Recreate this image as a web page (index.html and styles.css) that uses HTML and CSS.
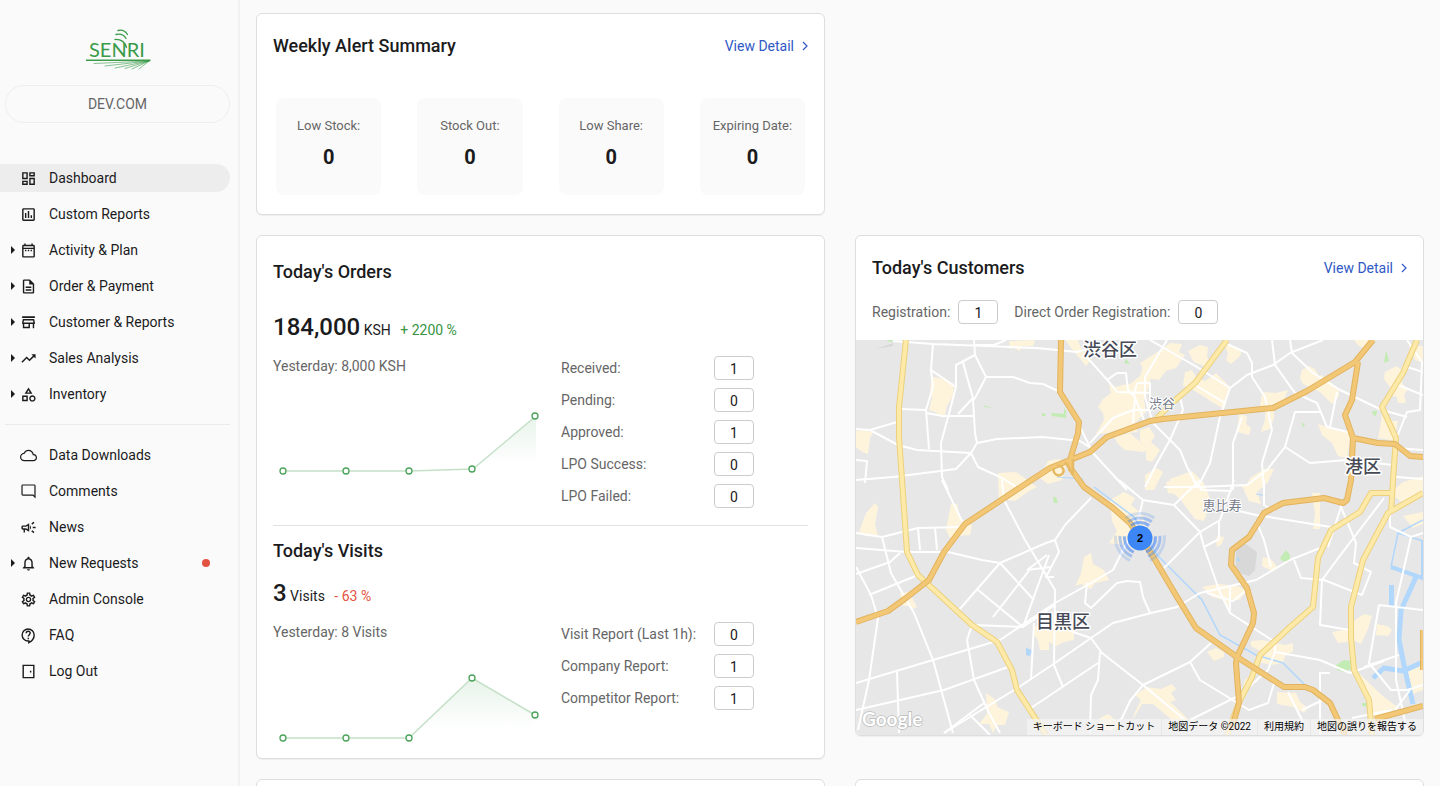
FILE: index.html
```html
<!DOCTYPE html>
<html lang="en">
<head>
<meta charset="utf-8">
<meta name="viewport" content="width=device-width, initial-scale=1">
<title>SENRI Dashboard</title>
<link rel="stylesheet" href="styles.css">
</head>
<body>
<div class="app">
  <aside class="sidebar">
    <svg class="logo" viewBox="85 28 68 42" role="img" aria-label="SENRI">
      <text class="logo-word" x="89" y="57">SENRI</text>
      <g fill="none" stroke="#3a9b49" stroke-linecap="round">
        <path d="M118 30.500q6-1.500 9.500 4" stroke-width="1.300"/>
        <path d="M116 34.500q7-1.500 10 4" stroke-width="1.300"/>
        <path d="M115 39.500q9-.5 11.500 8" stroke-width="1.300"/>
        <path d="M86 60.300h64.500" stroke-width="1.400" stroke-linecap="butt"/>
        <path d="M149 61 94 63.500M149 61l-44 5M149 61l-34 7M149 61l-24 7.500M149 61l-17 8M149 61l-10 8" stroke-width=".6"/>
      </g>
    </svg>
    <div class="tenant">DEV.COM</div>
    <nav class="nav" aria-label="Main">
      <a class="nav-item active" href="#"><span class="lead"></span><svg class="icon" viewBox="0 0 24 24"><path d="M19 5v2h-4V5h4M9 5v6H5V5h4m10 8v6h-4v-6h4M9 17v2H5v-2h4M21 3h-8v6h8V3zM11 3H3v10h8V3zm10 8h-8v10h8V11zm-10 4H3v6h8v-6z"/></svg>Dashboard</a>
      <a class="nav-item" href="#"><span class="lead"></span><svg class="icon" viewBox="0 0 24 24"><path d="M19 3H5c-1.100 0-2 .9-2 2v14c0 1.100.9 2 2 2h14c1.100 0 2-.9 2-2V5c0-1.100-.9-2-2-2zm0 16H5V5h14v14zM7 10h2v7H7zm4-3h2v10h-2zm4 6h2v4h-2z"/></svg>Custom Reports</a>
      <a class="nav-item" href="#"><span class="lead caret"></span><svg class="icon" viewBox="0 0 24 24"><path d="M7 11h2v2H7v-2zm14-5v14c0 1.100-.9 2-2 2H5c-1.110 0-2-.9-2-2l.01-14c0-1.100.88-2 1.990-2h1V2h2v2h8V2h2v2h1c1.100 0 2 .9 2 2zM5 8h14V6H5v2zm14 12V10H5v10h14zm-4-7h2v-2h-2v2zm-4 0h2v-2h-2v2z"/></svg>Activity &amp; Plan</a>
      <a class="nav-item" href="#"><span class="lead caret"></span><svg class="icon" viewBox="0 0 24 24"><path d="M8 16h8v2H8zm0-4h8v2H8zm6-10H6c-1.100 0-2 .9-2 2v16c0 1.100.89 2 1.990 2H18c1.100 0 2-.9 2-2V8l-6-6zm4 18H6V4h7v5h5v11z"/></svg>Order &amp; Payment</a>
      <a class="nav-item" href="#"><span class="lead caret"></span><svg class="icon" viewBox="0 0 24 24"><path d="M18.360 9l.6 3H5.040l.6-3h12.720M21 3H3v2.500h18V3zm-1 4H4l-1 5v2h1v6h10v-6h4v6h2v-6h1v-2l-1-5zM6 18v-4h6v4H6z"/></svg>Customer &amp; Reports</a>
      <a class="nav-item" href="#"><span class="lead caret"></span><svg class="icon" viewBox="0 0 24 24"><path d="M16 6l2.290 2.290-4.880 4.880-4-4L2 16.590 3.410 18l6-6 4 4 6.300-6.290L22 12V6z"/></svg>Sales Analysis</a>
      <a class="nav-item" href="#"><span class="lead caret"></span><svg class="icon" viewBox="0 0 24 24"><path d="M12 2l-5.500 9h11L12 2zm0 3.840L13.930 9h-3.870L12 5.840zM17.500 13c-2.490 0-4.500 2.010-4.500 4.500s2.010 4.500 4.500 4.500 4.500-2.010 4.500-4.500-2.010-4.500-4.500-4.500zm0 7c-1.380 0-2.500-1.120-2.500-2.500s1.120-2.500 2.500-2.500 2.500 1.120 2.500 2.500-1.120 2.500-2.500 2.500zM3 21.500h8v-8H3v8zm2-6h4v4H5v-4z"/></svg>Inventory</a>
      <hr class="nav-divider">
      <a class="nav-item" href="#"><span class="lead"></span><svg class="icon" viewBox="0 0 24 24"><path d="M19.350 10.040C18.670 6.590 15.640 4 12 4 9.110 4 6.600 5.640 5.350 8.040 2.340 8.360 0 10.910 0 14c0 3.310 2.690 6 6 6h13c2.760 0 5-2.240 5-5 0-2.640-2.050-4.780-4.650-4.960zM19 18.300H6c-2.400 0-4.300-1.900-4.300-4.300 0-2.200 1.700-4 3.800-4.200l1-.1.500-.9C8 7 9.900 5.700 12 5.700c2.750 0 5.150 2 5.700 4.700l.3 1.200 1.300.1c1.700.1 3 1.500 3 3.200 0 1.850-1.450 3.400-3.300 3.400z"/></svg>Data Downloads</a>
      <a class="nav-item" href="#"><span class="lead"></span><svg class="icon" viewBox="0 0 24 24"><path d="M20.300 18l-1.500-1.700H3.700V3.700h16.600V18zM20 2H4c-1.100 0-2 .9-2 2v12c0 1.100.9 2 2 2h14l4 4V4c0-1.100-.9-2-2-2z"/></svg>Comments</a>
      <a class="nav-item" href="#"><span class="lead"></span><svg class="icon" viewBox="0 0 24 24"><path d="M18 11v2h4v-2h-4zm-2 6.610c.96.71 2.210 1.650 3.200 2.390.4-.53.8-1.070 1.200-1.600-.99-.74-2.240-1.680-3.200-2.400-.4.54-.8 1.080-1.200 1.610zM20.400 5.600c-.4-.53-.8-1.070-1.200-1.600-.99.74-2.240 1.680-3.200 2.400.4.530.8 1.070 1.200 1.600.96-.72 2.210-1.650 3.200-2.400zM4 9c-1.100 0-2 .9-2 2v2c0 1.100.9 2 2 2h1v4h2v-4h1l5 3V6L8 9H4zm5.030 1.710L11 9.530v4.940l-1.970-1.180-.48-.29H4v-2h4.550l.48-.29zM15.500 12c0-1.330-.58-2.530-1.500-3.350v6.690c.92-.81 1.500-2.010 1.500-3.340z"/></svg>News</a>
      <a class="nav-item" href="#"><span class="lead caret"></span><svg class="icon" viewBox="0 0 24 24"><path d="M12 22c1.100 0 2-.9 2-2h-4c0 1.100.9 2 2 2zm6-6v-5c0-3.070-1.630-5.640-4.500-6.320V4c0-.83-.67-1.500-1.500-1.500s-1.500.67-1.500 1.500v.68C7.640 5.360 6 7.920 6 11v5l-2 2v1h16v-1l-2-2zm-2 1H8v-6c0-2.480 1.510-4.500 4-4.500s4 2.020 4 4.500v6z"/></svg>New Requests<span class="dot"></span></a>
      <a class="nav-item" href="#"><span class="lead"></span><svg class="icon" viewBox="0 0 24 24"><path d="M19.430 12.980c.04-.32.07-.64.07-.98 0-.34-.03-.66-.07-.98l2.110-1.650c.19-.15.24-.42.12-.64l-2-3.460c-.09-.16-.26-.25-.44-.25-.06 0-.12.01-.17.03l-2.490 1c-.52-.4-1.080-.73-1.690-.98l-.38-2.650C14.460 2.180 14.250 2 14 2h-4c-.25 0-.46.18-.49.42l-.38 2.650c-.61.25-1.170.59-1.690.98l-2.490-1c-.06-.02-.12-.03-.18-.03-.17 0-.34.09-.43.25l-2 3.460c-.13.22-.07.49.12.64l2.110 1.650c-.04.32-.07.65-.07.98 0 .33.03.66.07.98l-2.110 1.650c-.19.15-.24.42-.12.64l2 3.460c.09.16.26.25.44.25.06 0 .12-.01.17-.03l2.490-1c.52.4 1.080.73 1.690.98l.38 2.650c.03.24.24.42.49.42h4c.25 0 .46-.18.49-.42l.38-2.650c.61-.25 1.170-.59 1.690-.98l2.490 1c.06.02.12.03.18.03.17 0 .34-.09.43-.25l2-3.460c.12-.22.07-.49-.12-.64l-2.110-1.650zm-1.980-1.710c.04.31.05.52.05.73 0 .21-.02.43-.05.73l-.14 1.130.89.7 1.080.84-.7 1.210-1.270-.51-1.040-.42-.9.68c-.43.32-.84.56-1.250.73l-1.060.43-.16 1.130-.2 1.350h-1.400l-.19-1.350-.16-1.130-1.060-.43c-.43-.18-.83-.41-1.230-.71l-.91-.7-1.060.43-1.270.51-.7-1.210 1.080-.84.89-.7-.14-1.130c-.03-.31-.05-.54-.05-.74s.02-.43.05-.73l.14-1.130-.89-.7-1.080-.84.7-1.210 1.270.51 1.040.42.9-.68c.43-.32.84-.56 1.250-.73l1.060-.43.16-1.130.2-1.350h1.390l.19 1.350.16 1.130 1.060.43c.43.18.83.41 1.230.71l.91.7 1.060-.43 1.270-.51.7 1.210-1.070.85-.89.7.14 1.130zM12 8c-2.210 0-4 1.790-4 4s1.790 4 4 4 4-1.790 4-4-1.790-4-4-4zm0 6c-1.100 0-2-.9-2-2s.9-2 2-2 2 .9 2 2-.9 2-2 2z"/></svg>Admin Console</a>
      <a class="nav-item" href="#"><span class="lead"></span><svg class="icon line" viewBox="0 0 24 24"><path d="M11.500 2.800a8.500 8.500 0 1 0 0 17h1v2.400c4.500-2.400 7.500-6.800 7.500-10.900a8.500 8.500 0 0 0-8.500-8.500zM8.800 8.700c0-3.600 5.600-3.500 5.600-.2 0 2.300-2.700 2.400-2.700 5M11.700 15.200v2"/></svg>FAQ</a>
      <a class="nav-item" href="#"><span class="lead"></span><svg class="icon line" viewBox="0 0 24 24"><path d="M4.500 3.300h15v17.400h-15zM15 11v2.500"/></svg>Log Out</a>
    </nav>
    <div class="sidebar-foot">
      <button class="collapse" type="button" aria-label="Collapse menu"><svg viewBox="0 0 12 14"><path d="M9 1 3 7l6 6"/></svg></button>
    </div>
  </aside>

  <main class="main">
    <section class="card alerts">
      <header class="card-head"><h2>Weekly Alert Summary</h2><a class="detail" href="#">View Detail<svg viewBox="0 0 6 10"><path d="M1 1l4 4-4 4"/></svg></a></header>
      <div class="tiles">
        <div class="tile"><span>Low Stock:</span><b>0</b></div>
        <div class="tile"><span>Stock Out:</span><b>0</b></div>
        <div class="tile"><span>Low Share:</span><b>0</b></div>
        <div class="tile"><span>Expiring Date:</span><b>0</b></div>
      </div>
    </section>

    <section class="card today">
      <h2>Today's Orders</h2>
      <p class="value orders-value"><b>184,000</b> KSH <span class="up">+ 2200 %</span></p>
      <div class="split">
        <div>
          <p class="prev">Yesterday: 8,000 KSH</p>
          <svg class="chart" viewBox="0 0 272 100" role="img" aria-label="Orders trend">
            <defs><linearGradient id="fade" x1="0" y1="0" x2="0" y2="1"><stop offset="0" stop-color="#3a9b49" stop-opacity=".12"/><stop offset=".85" stop-color="#3a9b49" stop-opacity="0"/></linearGradient></defs>
            <path d="M10 95h127l63-2 63-53v55z" fill="url(#fade)"/>
            <path class="trend" d="M10 95h127l63-2 63-53"/>
            <g class="points"><circle cx="10" cy="95" r="3"/><circle cx="73" cy="95" r="3"/><circle cx="136" cy="95" r="3"/><circle cx="199" cy="93" r="3"/><circle cx="262" cy="40" r="3"/></g>
          </svg>
        </div>
        <dl class="counts">
          <div><dt>Received:</dt><dd>1</dd></div>
          <div><dt>Pending:</dt><dd>0</dd></div>
          <div><dt>Approved:</dt><dd>1</dd></div>
          <div><dt>LPO Success:</dt><dd>0</dd></div>
          <div><dt>LPO Failed:</dt><dd>0</dd></div>
        </dl>
      </div>
      <hr class="rule">
      <h2>Today's Visits</h2>
      <p class="value visits-value"><b>3</b> Visits <span class="down">- 63 %</span></p>
      <div class="split">
        <div>
          <p class="prev">Yesterday: 8 Visits</p>
          <svg class="chart" viewBox="0 0 272 100" role="img" aria-label="Visits trend">
            <path d="M10 96h126l63-60 63 37v23z" fill="url(#fade)"/>
            <path class="trend" d="M10 96h126l63-60 63 37"/>
            <g class="points"><circle cx="10" cy="96" r="3"/><circle cx="73" cy="96" r="3"/><circle cx="136" cy="96" r="3"/><circle cx="199" cy="36" r="3"/><circle cx="262" cy="73" r="3"/></g>
          </svg>
        </div>
        <dl class="counts">
          <div><dt>Visit Report (Last 1h):</dt><dd>0</dd></div>
          <div><dt>Company Report:</dt><dd>1</dd></div>
          <div><dt>Competitor Report:</dt><dd>1</dd></div>
        </dl>
      </div>
    </section>

    <section class="card customers">
      <header class="card-head"><h2>Today's Customers</h2><a class="detail" href="#">View Detail<svg viewBox="0 0 6 10"><path d="M1 1l4 4-4 4"/></svg></a></header>
      <dl class="registrations">
        <div><dt>Registration:</dt><dd>1</dd></div>
        <div><dt>Direct Order Registration:</dt><dd>0</dd></div>
      </dl>
      <div class="map">
        <svg class="map-art" viewBox="856 340 567 395" role="img" aria-label="Map of Meguro, Shibuya and Minato">
          <rect x="856" y="340" width="567" height="395" fill="#e7e7e7"/>
          <!-- built-up areas -->
          <g fill="#fef4dc">
            <path d="M932 377l8 1 14 6-1 12-6 10-3 12-9-6-6-2 3-12-2-9z"/>
            <path d="M1009 341l26-1-2 6-11 0-2 5-6-3-4 1z"/>
            <path d="M1065 340l13 0 2 6 10 15-4 5-14-17z"/>
            <path d="M1103 399l8-6-2-10 7 4 6-2 8-1 10-8 4-12 6-8v28l-6 16 2 12-12 12 4 8-10 1-8-4-12 4-12 1 8-14-1-7-5-6z"/>
            <path d="M1114 437l16-4 18 16-4 3-19-2-7-6z"/>
            <path d="M1140 363l8-5 14-9 8-6 12 1-3 8 6 3-9 13-10 3-7 9-8-1-5-5z"/>
            <path d="M1188 351l12-6 8 2-1 10 4 7-7 2-10-4z"/>
            <path d="M1185 372l7-2 4 7 9 4 11-8 14 14-6 22-12-7-20-13-9-3z"/>
            <path d="M1225 346l8 0 9 4-2 6-9 8-5-4 2-6z"/>
            <path d="M1300 378l2-8 7-4 6 3 4 8 3-2 17 14 0 7-7 8-12-12-17-8z"/>
            <path d="M1262 392l14 1 12-3-4 10-12 6-12 0z"/><path d="M1265 410l9-2 0 10-4 11-9 3 4-12z"/>
            <path d="M1239 414l8 2-1 8 5 4-2 7-12-3z"/>
            <path d="M1318 424l16 5 17 4-4 25-9-2-6-13-10-8z"/>
            <path d="M1354 340l18 0-5 9-8-3z"/>
            <path d="M1385 372l11-6 8 5-2 12 6 6-4 6 2 8-8 0-1-6-9-2 2-8-6-8z"/>
            <path d="M1382 411l10 10 6 0-2 10 0 10-18-3 3-16z"/>
            <path d="M1409 346l14 0v17l-8-3z"/>
            <path d="M1140 430l9-3 6 9-4 6 9 8-8 12-6-2 0-12-6-7z"/>
            <path d="M1145 475l12-7 6 4-9 18-9 0z"/><path d="M1166 482l12-4 8 9-6 8-12-2z"/>
            <path d="M1250 478l14-9 10 0-6 13-11 10 4 12-12-3-5-10z"/>
            <path d="M1170 479l22-8 12 12 7 18-7 20-9-2-15-20-8-7z"/>
            <path d="M856 431l6-1 11 2-3 6-2 16-6-2-6-5z"/>
            <path d="M1048 461l10-2 9 3-5 18-14 4-8-6z"/>
            <path d="M998 473l18-1 14 10 7 5-8 4-14 10-16-2z"/>
            <path d="M866 513l9-10 3 4-3 18 3 11-13 0-6-4z"/>
            <path d="M951 504l6 0 3 14 12 7-2 10-13 1-7 2-4-8z"/>
            <path d="M1110 500l14-8 11 6-4 7 12 10 4 16-10 6-12 4-2 4-14-2 8-12-5-10z"/>
            <path d="M1084 557l7-4 2 11 11 6 5 10-14 3-4 6-10-5-6 2 6-12z"/>
            <path d="M1034 626h30l10 7 0 7-10 2-8 4-7-4 0 8-9 0-2-10-4-5z"/>
            <path d="M900 593l9-1 8 15-4 2-5-3-5 0z"/>
            <path d="M1202 587l16-3 20 2 9 5-8 9-8-1-3 9-4-8-12-3z"/>
            <path d="M1217 536l7 1-2 7-5 3-1-6z"/>
            <path d="M1263 557l8 2 7 9-6 3-10-5z"/>
            <path d="M1312 493l8 0 0 36-7 0 2-15z"/><path d="M1241 486l14-6 8 3-6 8-8 3z"/>
            <path d="M1251 641l12-1 22 5 8-2 0 8-8 5-2 7-13 2-14-4 4-10-9-5z"/>
            <path d="M1207 652l9-4 8 4 0 5-10 4z"/>
            <path d="M1147 687l14 2 11-5 4 5-5 4 5 7-6 2 12 11 7 7-17 0-19-16-11 0-10 17 3-9 6-12-6-5z"/>
            <path d="M986 693l10 7 1 7 12 5-4 13-8 0-4 8-4-9-10 0 8-10z"/>
            <path d="M1277 692l19 1 4 9 8 6-4 5-11-6-16-3z"/>
            <path d="M1355 620l9-6 8 2-4 13-7 15-6-3-17 2-6-11 17-3z"/>
            <path d="M1377 624l10 2 5 4-4 6-12-1z"/>
            <path d="M1358 672l12 12 14 13 15 11-13 6-11 5-5-16z"/>
            <path d="M1403 482l20-6v19l-14 8-9-2-5-4-4-5z"/><path d="M1403 516l20-4v12l-10 4z"/>
            <path d="M1245 680l8-7-3 14-6 12-1-11zM1408 672l15-7 0 25-10 4z"/>
            <path d="M1100 718l8-4 14 11-6 4-18 2z"/>
          </g>
          <!-- parks, cemetery and ponds -->
          <g fill="#c3ebb4"><path d="M1051 413l15 1 0 4-14-2zM1042 413l4 1-1 2-3 0zM1064 408l3 4-3 3zM983 405l10 3-8-1zM1126 359l4 5-6-1zM1280 558l6-8 4 5 0 7-8-1zM1386 350l3 11-5 2zM1372 411l5 0-1 5-3-1zM1053 497l3 0 2 6-4 0zM1336 665l8-5 8 1-1 8-7 3-7-2zM1362 703l8 0 0 4-8-1zM886 340l11 0-7 2zM1302 423l3 1-2 4z"/></g>
          <path d="M1236 546l10-2 11 8-2 18-6 6-13-4zM876 349l17-6 0 3z" fill="#d8d8d8"/>
          <g fill="#b1d7fc"><path d="M1026 648l6 2-2 6-4-1zM1238 557l2 4-4 0zM1389 585h5v22h-5z"/></g>
          <g fill="none" stroke="#b1d7fc">
            <path d="M1094 487l40 30 23 38 45 45 18 35 36 20 27 8 22 22" stroke-width="1.500"/>
            <path d="M1391 567l7-34 25 8M1398 533l25-13" stroke-width="1.500"/>
            <path d="M1391 567l32 11M1423 540v40" stroke-width="4"/>
            <path d="M1416 577l-15 33-2 30 6 30 8 34M1373 678l11-10 19 3 20-9" stroke-width="5"/>
            <path d="M1057 477l26 2M1256 494l10 2" stroke-width="1"/>
          </g>
          <!-- minor streets -->
          <g class="street">
            <path d="M893 341l40 3 104 4 40 4 14-4M974 340l1 15 11 22-11 21-2 2 2 33 2 10-6 10-15 16-63 8-37 3M933 344l-2 26 2 17-7 23-26-1"/>
            <path d="M931 370l25 17-6 23-9 33 1 34 6 13M975 355l-19 10v22M963 362l4 15 6 21-15 16M926 410l3 39M926 413l17 3h30"/>
            <path d="M856 429l14 1 28 15 19 5 54 3 7 14 22 10 18 11M870 430l27-8M986 377h27l17 6 13 1 17 8M977 443l20-4 46-2 37 4 11 7M856 460l11 1-2 22M1080 427l13 26 34 37"/>
            <path d="M1085 355l25 28 7 9 33 1M1107 380l10-7h9l2 17 7 7-2 26M1090 443l23-25 20-8h17M1137 383l-3 12 10 25M974 345h20l12-5M1138 383h12v30"/>
            <path d="M1150 340l47 27 33 21M1167 340l-22 37v20l8 26 27 27 7 17 11 20M1195 385l30 18M1180 397l3 13-13 30-13 23-12 24M1225 343l22 10 5 10v14l13 20 7 33-10 33 2 27"/>
            <path d="M1323 340l-33 13-17 12-26 10-17 13-10 29-10 46-12 24h-34M1272 340l3 25 20 28 22 10 10 24 25 6M1290 340l2 13 21 20 27 17 42 20 25 7M1337 392l-7 35M1320 412h-25l-10 35-18 23-20 15-50 2"/>
            <path d="M1285 447l25 16 37-3 46 5M1242 417l-9 26v47M1407 340l15 22-2 48-13 2-10 25M1398 385l25 10M1396 477l27 2M1395 448l28 2M1404 366l19 6"/>
            <path d="M1002 480l2 20 21 40 30 50-1 75 9 22M942 480l21 43M856 533l26 4 36-9 45-1M918 528l2 22M935 528l2 22M856 548l51 4h41l34 8 18 3 34 37"/>
            <path d="M882 537l9 36 23 40 19 47 20 73M856 574l34-12 10-9M869 595l49-20M856 567l15 28 7 23-9 62-11 50M856 683l77-23 67-20 55-37 36-20 22-13 15-30"/>
            <path d="M856 710l88-20 64-23M897 672l2 61M1000 563l46-20 9-3 10-15 26-27M1000 563l-41 47M978 590l45 37M1031 568l-38 49M1049 555l-26 72M1034 623l-3 57M1055 540l4 12-13 25 8 0M1027 570l24-3M1027 570l20-15"/>
            <path d="M972 625l-5 15 7 40 15 33 11 20M972 625l51 2 32-22M1091 638l22-15 38-10 26-6 23-14 56-13 34-20 30-12M1091 638l-36 25-36 24-75 46"/>
            <path d="M1055 620l18 12 18 6 11 15 41 32 42 35M1100 652l-2 28-7 15-1 38M1087 583l-2 20 6 5 26-25 10-2 13 1 3 15 7 16M1098 663l-70 47M1110 730l12-12 8-17 13-16 47-23 21-19M944 733l40-30M970 715l20 20"/>
            <path d="M1190 662l10 18 49 30 19-7 7-23M1190 720l50-25 28-25 7-18 45 8 30 13 34-12M1320 735v-62h10M1119 480l24 20 31 5 26 27 4 15 15 43 11 23 45 29v10M1143 500l-5 20M1174 505l26-25M1164 568l36-36 20-12 14-40M1204 547l15-8 0-18"/>
            <path d="M1193 480l9 10 30 1M1264 480v25l10 6M1226 508l30 7 75 12M1341 500v7l15 36-2 20 17 9-9 23-38-15-23-2-7-18M1384 498l-45 59-17 23-2 45 30 5M1256 520l8 20 7 27M1341 507l-13 40M1390 513l0 14 21 10 12-4"/>
            <path d="M1411 537l-15 66v77l11 50M1379 605l44 5M1379 605l-10 58 22 27 16 0 16-5M1364 667l35-12M1395 710l15-20M1288 692l15 30M1302 710l25-12M1352 718l40-8M1207 593l26 8 16-13M1230 586v25"/>
          </g>
          <!-- secondary roads -->
          <g fill="none" stroke-linejoin="round">
            <g stroke="#ecd07c" stroke-width="6">
              <path d="M906 340l-7 67v30l3 43 5 72 11 23 54 50 25 17 15 28 5 20 29 45M1227 340l-32 43-22 19-16 16M1417 340l-14 33-21 34 14 31-3 42-2 33"/>
              <path d="M1423 493l-35 20-25 47-12 47v30l3 33 15 30 3 35M1391 493h-20l-11 19-29 18-13 28-5 49-23 20-30 28-8 22-12 23-13 35"/>
            </g>
            <g stroke="#fdeaa9" stroke-width="4">
              <path d="M906 340l-7 67v30l3 43 5 72 11 23 54 50 25 17 15 28 5 20 29 45M1227 340l-32 43-22 19-16 16M1417 340l-14 33-21 34 14 31-3 42-2 33"/>
              <path d="M1423 493l-35 20-25 47-12 47v30l3 33 15 30 3 35M1391 493h-20l-11 19-29 18-13 28-5 49-23 20-30 28-8 22-12 23-13 35"/>
            </g>
          </g>
          <!-- motorways -->
          <g fill="none" stroke-linejoin="round">
            <g stroke="#e2b35e" stroke-width="6">
              <path d="M1061 340l-1 52 19 30-1 11-8 27 1 9 13 18 29 21 17 15 21 30 26 44 19 31 41 29 47 30h21l8 3 17 13 15 32"/>
              <path d="M856 622l32-11 18-13 23-18 15-28 21-28 65-43 20-13 40-16 17-15 43-16 13-2 110-11 34-17 48-29 18-22M1358 362l-6 38-7 15 8 23-2 42-4 20-4 3-19-5-41 5-19 10-15 24-17 13-1 15 16 23 7 25-1 10-16 34-1 6 3 40-7 25M1353 438l25 5 17 1 15 12 14 1M1375 719l48-13M1423 630v40"/>
            </g>
            <g stroke="#f2c876" stroke-width="4">
              <path d="M1061 340l-1 52 19 30-1 11-8 27 1 9 13 18 29 21 17 15 21 30 26 44 19 31 41 29 47 30h21l8 3 17 13 15 32"/>
              <path d="M856 622l32-11 18-13 23-18 15-28 21-28 65-43 20-13 40-16 17-15 43-16 13-2 110-11 34-17 48-29 18-22M1358 362l-6 38-7 15 8 23-2 42-4 20-4 3-19-5-41 5-19 10-15 24-17 13-1 15 16 23 7 25-1 10-16 34-1 6 3 40-7 25M1353 438l25 5 17 1 15 12 14 1M1375 719l48-13M1423 630v40"/>
            </g>
            <path d="M1054 468c-2 6 5 10 9 5 2-4-2-8-6-7M1065 462l8 12v-15" stroke="#e8ba63" stroke-width="2.500"/>
          </g>
          <g class="map-label">
            <text class="ward" x="1110" y="356">渋谷区</text>
            <text class="ward" x="1363" y="473">港区</text>
            <text class="ward" x="1063" y="628">目黒区</text>
            <text class="area" x="1162" y="408">渋谷</text>
            <text class="area" x="1222" y="510">恵比寿</text>
          </g>
          <g fill="none" stroke="#4285f4" stroke-dasharray="72 48" transform="rotate(-6 1140 538)">
            <circle cx="1140" cy="538" r="15.500" pathLength="360" stroke-width="3" stroke-opacity=".6"/>
            <circle cx="1140" cy="538" r="20" pathLength="360" stroke-width="3" stroke-opacity=".4"/>
            <circle cx="1140" cy="538" r="24.500" pathLength="360" stroke-width="3" stroke-opacity=".2"/>
          </g>
          <circle cx="1140" cy="538" r="12.500" fill="#3c86f5"/>
          <text class="cluster" x="1140" y="542">2</text>
          <text class="google" x="862" y="726">Google</text>
        </svg>
        <div class="attribution" lang="ja">
          <button type="button">キーボード ショートカット</button><span>地図データ ©2022</span><a href="#">利用規約</a><a href="#">地図の誤りを報告する</a>
        </div>
      </div>
    </section>

    <section class="card next"></section>
    <section class="card next"></section>
  </main>
</div>
</body>
</html>
```

FILE: styles.css
```css
* { box-sizing: border-box; }
body {
  margin: 0;
  background: #fafafa;
  color: #1b1b1d;
  font: 14px/20px Roboto, "Noto Sans CJK JP", sans-serif;
}
h2, p, dl, dd { margin: 0; }
a { color: inherit; text-decoration: none; }
svg { display: block; flex: none; }
h2 { font-size: 18px; line-height: 24px; font-weight: 500; }

.app {
  display: grid;
  grid-template-columns: 240px 1fr;
  height: 100vh;
  overflow: hidden;
}

/* Sidebar */
.sidebar {
  display: flex;
  flex-direction: column;
  border-right: 2px solid #f1f1f1;
  padding-top: 28px;
}
.logo { width: 68px; height: 42px; margin: 0 auto; }
.logo-word { font: 20px Lato, sans-serif; fill: #3a9b49; }
.tenant {
  margin: 15px 8px 41px 5px;
  padding: 8px;
  border: 1px solid #eee;
  border-radius: 20px;
  line-height: 20px;
  text-align: center;
  color: #666;
}
.nav { display: flex; flex-direction: column; gap: 8px; flex: 1; }
.nav-item {
  display: flex;
  align-items: center;
  height: 28px;
  margin-right: 8px;
  padding-right: 20px;
  border-radius: 0 14px 14px 0;
}
.nav-item.active { background: #ededed; }
.lead { width: 20px; padding-left: 11px; }
.caret::before {
  content: "";
  display: block;
  width: 0;
  border: 4px solid transparent;
  border-left-color: #1b1b1d;
  border-right: 0;
}
.icon { width: 17px; height: 17px; margin-right: 12px; fill: #1b1b1d; }
.icon.line { fill: none; stroke: #1b1b1d; stroke-width: 2; }
.dot { width: 8px; height: 8px; margin-left: auto; border-radius: 50%; background: #e25241; }
.nav-divider { width: 225px; margin: 8px 0 8px 5px; border: 0; border-top: 1px solid #eaeaea; }
.sidebar-foot {
  display: flex;
  justify-content: flex-end;
  padding: 18px 25px 14px;
  border-top: 1px solid #eee;
}
.collapse { padding: 0; border: 0; background: none; cursor: pointer; }
.collapse svg { width: 14px; height: 17px; fill: none; stroke: #1b1b1d; stroke-width: 2; }

/* Cards */
.main {
  display: grid;
  grid-template-columns: 1fr 1fr;
  grid-auto-rows: max-content;
  align-items: start;
  gap: 20px 30px;
  padding: 13px 16px 0;
}
.card {
  min-width: 0;
  background: #fff;
  border: 1px solid #dedede;
  border-radius: 6px;
  box-shadow: 0 1px 1px #0000000d;
}
.card-head { display: flex; align-items: center; justify-content: space-between; padding: 20px 16px 0; }
.detail { display: flex; align-items: center; gap: 8px; color: #3059c6; }
.detail svg { width: 6px; height: 10px; fill: none; stroke: #3059c6; stroke-width: 1.2; }
.today, .customers { grid-row: 2; }
.next { grid-row: 3; height: 100px; }

.tiles { display: grid; grid-template-columns: repeat(4, 1fr); gap: 36px; padding: 40px 19px 19px; }
.tile {
  padding: 18px 0 24px;
  border-radius: 8px;
  background: #fafafa;
  text-align: center;
  white-space: nowrap;
}
.tile span { display: block; font-size: 13px; color: #666; }
.tile b { display: block; margin-top: 7px; font-size: 20px; line-height: 28px; }

.today { padding: 24px 16px 16px; }
.value { line-height: 20px; }
.value b { font-size: 24px; line-height: 32px; font-weight: 500; }
.value span { margin-left: 6px; }
.orders-value { margin: 27px 0 13px; }
.visits-value { margin: 14px 0 13px; }
.up { color: #38943f; }
.down { color: #e25241; }
.split { display: grid; grid-template-columns: 272px 1fr; gap: 16px; }
.prev { color: #666; }
.chart { width: 272px; height: 100px; }
.trend { fill: none; stroke: #c5e0c8; stroke-width: 1.5; }
.points { fill: #fff; stroke: #4ba35a; stroke-width: 1.3; }
.rule { margin: 17px 0 13px; border: 0; border-top: 1px solid #e2e2e2; }

.counts { display: flex; flex-direction: column; gap: 8px; }
.counts div, .registrations div { display: flex; align-items: center; }
.counts dt { width: 153px; }
dt { color: #666; }
dd {
  width: 40px;
  height: 24px;
  border: 1px solid #ccc;
  border-radius: 4px;
  text-align: center;
  line-height: 24px;
}
.registrations { display: flex; gap: 16px; padding: 20px 16px 16px; }
.registrations dt { margin-right: 8px; }

/* Map */
.map { position: relative; overflow: hidden; border-radius: 0 0 5px 5px; }
.map-art { width: 100%; height: auto; }
.street { fill: none; stroke: #fff; stroke-width: 2; stroke-linejoin: round; }
.map-label { text-anchor: middle; font-family: "Noto Sans CJK JP", sans-serif; paint-order: stroke; stroke: #fff; stroke-linejoin: round; }
.ward { font-size: 18px; font-weight: 500; fill: #474a57; stroke-width: 3px; }
.area { font-size: 13px; fill: #777b8a; stroke-width: 2px; }
.cluster { font: bold 11px "Liberation Sans", sans-serif; text-anchor: middle; }
.google { font: bold 19px Lato, sans-serif; fill: #fff; stroke: #bbb; stroke-width: 1.5px; paint-order: stroke; }
.attribution {
  position: absolute;
  right: 0;
  bottom: 0;
  display: flex;
  gap: 1px;
  color: #000;
  font: 10px/16px Roboto, "Noto Sans CJK JP", sans-serif;
}
.attribution > * { padding: 0 6px; background: #f5f5f5b3; }
.attribution button { border: 0; color: inherit; font: inherit; cursor: pointer; }
```
